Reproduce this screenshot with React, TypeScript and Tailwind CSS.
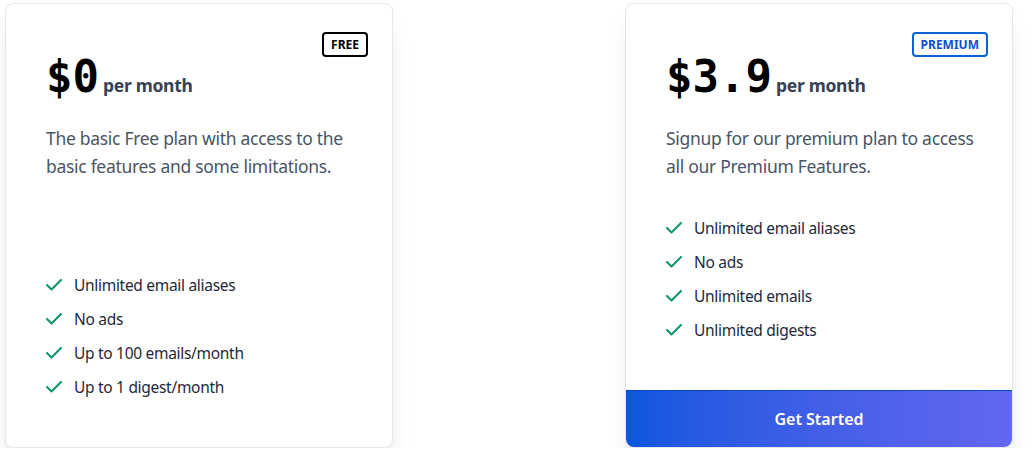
type Plan = {
  badge: string;
  badgeClass: string;
  price: string;
  description: string;
  features: string[];
  cta?: string;
};

const plans: Plan[] = [
  {
    badge: "FREE",
    badgeClass: "border-black text-black",
    price: "$0",
    description:
      "The basic Free plan with access to the basic features and some limitations.",
    features: [
      "Unlimited email aliases",
      "No ads",
      "Up to 100 emails/month",
      "Up to 1 digest/month",
    ],
  },
  {
    badge: "PREMIUM",
    badgeClass: "border-[#0b63d6] text-[#0a4fcf]",
    price: "$3.9",
    description:
      "Signup for our premium plan to access all our Premium Features.",
    features: [
      "Unlimited email aliases",
      "No ads",
      "Unlimited emails",
      "Unlimited digests",
    ],
    cta: "Get Started",
  },
];

const CheckMark = () => (
  <svg
    width="16"
    height="12"
    viewBox="0 0 16 12"
    fill="none"
    className="shrink-0 text-[#0b9467]"
  >
    <path
      d="M1 6 L5.5 10.5 L15 1"
      stroke="currentColor"
      strokeWidth="2"
      strokeLinecap="round"
      strokeLinejoin="round"
    />
  </svg>
);

const PlanCard = ({ plan }: { plan: Plan }) => {
  return (
    <div className="relative flex w-[388px] flex-col rounded-lg border border-gray-200 bg-white shadow-xl">
      <span
        className={`absolute right-[24px] top-[28px] flex h-[25px] items-center rounded border-2 px-[7px] text-xs font-bold ${plan.badgeClass}`}
      >
        {plan.badge}
      </span>
      <div className="pl-10 pr-8 pt-[51px]">
        <div className="flex items-baseline">
          <span
            className="text-[44px] font-bold leading-none text-black"
            style={{ fontFamily: '"DejaVu Sans Mono", monospace' }}
          >
            {plan.price}
          </span>
          <span className="ml-1 text-[17.5px] font-bold tracking-[-0.3px] text-gray-700">
            per month
          </span>
        </div>
        <p className="mt-[25px] text-[17.5px] leading-7 tracking-[-0.3px] text-gray-600">
          {plan.description}
        </p>
      </div>
      <ul className="mt-auto flex flex-col gap-2.5 px-10 pb-12 pt-9">
        {plan.features.map((f) => (
          <li
            key={f}
            className="flex items-center gap-3 text-[15.5px] leading-6 tracking-[-0.3px] text-gray-800"
          >
            <CheckMark />
            <span>{f}</span>
          </li>
        ))}
      </ul>
      {plan.cta && (
        <button className="h-[57px] rounded-b-lg border-t border-[#0a46b8] bg-gradient-to-r from-[#0957de] to-[#6366f1] text-base font-semibold text-white">
          {plan.cta}
        </button>
      )}
    </div>
  );
};

export default function App() {
  return (
    <div
      className="flex gap-[232px] bg-white pl-[5px] pt-[3px]"
      style={{ fontFamily: '"Noto Sans", sans-serif' }}
    >
      {plans.map((p) => (
        <PlanCard key={p.badge} plan={p} />
      ))}
    </div>
  );
}
